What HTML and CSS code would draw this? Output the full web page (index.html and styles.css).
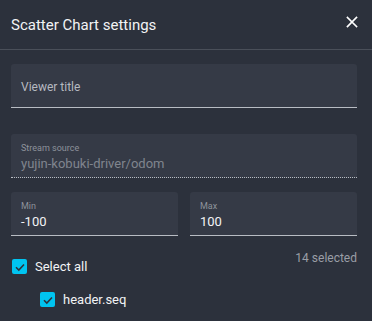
FILE: index.html
```html
<!DOCTYPE html>
<html lang="en">
<head>
    <meta charset="UTF-8">
    <meta name="viewport" content="width=device-width, initial-scale=1.0">
    <title>Scatter Chart settings</title>
    <link rel="stylesheet" href="styles.css">
</head>
<body>
    <div class="dialog">
        <div class="dialog-header">
            <h1>Scatter Chart settings</h1>
            <button class="close-btn" aria-label="Close">
                <svg width="12" height="12" viewBox="0 0 12 12">
                    <path d="M1.5 1.5 L10.5 10.5 M10.5 1.5 L1.5 10.5" stroke="#fff" stroke-width="1.7" stroke-linecap="square"/>
                </svg>
            </button>
        </div>
        <div class="dialog-body">
            <div class="field field-plain">
                <span class="placeholder">Viewer title</span>
            </div>
            <div class="field field-disabled">
                <span class="field-label">Stream source</span>
                <span class="field-value">yujin-kobuki-driver/odom</span>
            </div>
            <div class="range-row">
                <div class="field">
                    <span class="field-label">Min</span>
                    <span class="field-value">-100</span>
                </div>
                <div class="field">
                    <span class="field-label">Max</span>
                    <span class="field-value">100</span>
                </div>
            </div>
            <div class="select-row">
                <label class="check">
                    <span class="box">
                        <svg width="12" height="12" viewBox="0 0 12 12"><path d="M2 6.2 L4.8 9 L10 3.5" fill="none" stroke="#2c313c" stroke-width="1.6"/></svg>
                    </span>
                    Select all
                </label>
                <span class="count">14 selected</span>
            </div>
            <label class="check sub">
                <span class="box">
                    <svg width="12" height="12" viewBox="0 0 12 12"><path d="M2 6.2 L4.8 9 L10 3.5" fill="none" stroke="#2c313c" stroke-width="1.6"/></svg>
                </span>
                header.seq
            </label>
        </div>
    </div>
</body>
</html>
```

FILE: styles.css
```css
body {
    margin: 0;
    background: #2c313c;
    font-family: Roboto, 'Noto Sans', sans-serif;
    color: #fff;
}

.dialog {
    width: 372px;
    height: 321px;
    overflow: hidden;
}

.dialog-header {
    height: 50px;
    display: flex;
    align-items: center;
    justify-content: space-between;
    padding: 0 14px 0 11px;
    border-bottom: 1px solid #4a4f59;
    box-sizing: border-box;
}

.dialog-header h1 {
    margin: 0;
    font-size: 15px;
    font-weight: 400;
    color: #f2f3f5;
}

.close-btn {
    background: none;
    border: none;
    padding: 0;
    width: 12px;
    height: 12px;
    margin-top: -6px;
    display: flex;
}

.dialog-body {
    padding: 14px 15px 0 11px;
}

.field {
    background: #353a46;
    border-radius: 3px 3px 0 0;
    border-bottom: 1px solid #b8bcc3;
    height: 44px;
    box-sizing: border-box;
    padding: 5px 10px 0;
    display: flex;
    flex-direction: column;
}

.field-plain {
    justify-content: center;
    padding-top: 2px;
}

.placeholder {
    font-size: 12px;
    color: #b5b9c0;
}

.field-disabled {
    margin-top: 26px;
    border-bottom: 1px dotted #b8bcc3;
}

.field-label {
    font-size: 9px;
    color: #8d929b;
    line-height: 14px;
    padding-top: 2px;
}

.field-value {
    font-size: 13px;
    line-height: 18px;
    color: #f2f3f5;
}

.field-disabled .field-value {
    color: #80858e;
}

.range-row {
    display: grid;
    grid-template-columns: 1fr 1fr;
    gap: 12px;
    margin-top: 14px;
}

.select-row {
    display: flex;
    justify-content: space-between;
    align-items: flex-start;
    margin-top: 15px;
}

.check {
    display: flex;
    align-items: center;
    gap: 8px;
    font-size: 13px;
    color: #f2f3f5;
    margin-top: 8px;
}

.box {
    width: 15px;
    height: 15px;
    border-radius: 2px;
    background: #00c4f0;
    display: flex;
    align-items: center;
    justify-content: center;
    margin-left: 1px;
}

.count {
    font-size: 12px;
    color: #9a9ea6;
}

.check.sub {
    margin-top: 18px;
    margin-left: 28px;
}
```
